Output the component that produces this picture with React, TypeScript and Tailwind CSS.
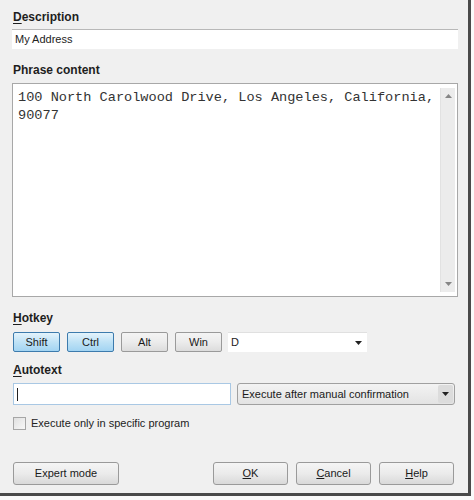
import React from "react";

const font = { fontFamily: '"Liberation Sans", Arial, sans-serif' };

function Label({ u, rest, className = "" }: { u: string; rest: string; className?: string }) {
  return (
    <div className={"h-[16px] leading-[16px] text-[12px] font-bold text-[#1e1e1e] " + className}>
      <span className="underline decoration-1 underline-offset-2">{u}</span>
      {rest}
    </div>
  );
}

function Tri({ className = "" }: { className?: string }) {
  return (
    <svg width="7" height="4" viewBox="0 0 7 4" className={className}>
      <path d="M0 0 L7 0 L3.5 4 Z" fill="#222" />
    </svg>
  );
}

function KeyBtn({ label, on }: { label: string; on?: boolean }) {
  return (
    <div
      className={
        "w-[47px] h-[20px] flex items-center justify-center text-[11px] rounded-[2px] border " +
        (on
          ? "border-[#3d7bad] bg-gradient-to-b from-[#e4f3fb] via-[#bfe2f6] to-[#a2d4f2] text-[#1a1a1a]"
          : "border-[#9a9a9a] bg-gradient-to-b from-[#f4f4f4] via-[#ececec] to-[#dcdcdc] text-[#1a1a1a]")
      }
    >
      {label}
    </div>
  );
}

function DlgBtn({ children, w }: { children: React.ReactNode; w: string }) {
  return (
    <div
      className={
        w +
        " h-[23px] flex items-center justify-center text-[11px] text-[#1a1a1a] rounded-[3px] border border-[#9a9a9a] bg-gradient-to-b from-[#f5f5f5] via-[#ebebeb] to-[#d9d9d9]"
      }
    >
      {children}
    </div>
  );
}

export default function App() {
  return (
    <div className="w-[474px] h-[500px] bg-[#fafafa]" style={font}>
      <div className="w-[471px] h-[496px] bg-[#f0f0f0] border-r-[3px] border-b-[3px] border-[#4a4a4a] flex flex-col pl-[12px] pr-[13px]">
        <Label u="D" rest="escription" className="mt-[9px] ml-[1px]" />
        <div className="mt-[4px] h-[20px] w-[446px] bg-white border-t border-[#b8b8b8] flex items-center pl-[3px] text-[11px] text-[#222]">
          My Address
        </div>

        <Label u="" rest="Phrase content" className="mt-[13px] ml-[1px]" />
        <div className="mt-[5px] h-[214px] w-[446px] bg-white border border-[#a8a8a8] flex">
          <div
            className="flex-1 pl-[5px] pt-[5px] text-[13.6px] leading-[18px] text-[#333]"
            style={{ fontFamily: '"Liberation Mono", "Courier New", monospace' }}
          >
            100 North Carolwood Drive, Los Angeles, California,
            <br />
            90077
          </div>
          <div className="w-[15px] my-[4px] mr-[2px] bg-[#ececec] border-l border-[#e2e2e2] flex flex-col items-center justify-between py-[6px]">
            <Tri className="rotate-180 opacity-50" />
            <Tri className="opacity-50" />
          </div>
        </div>

        <Label u="H" rest="otkey" className="mt-[13px] ml-[1px]" />
        <div className="mt-[6px] flex items-center gap-[7px] ml-[1px]">
          <KeyBtn label="Shift" on />
          <KeyBtn label="Ctrl" on />
          <KeyBtn label="Alt" />
          <KeyBtn label="Win" />
          <div className="w-[139px] h-[20px] bg-white border-t border-[#e0e0e0] flex items-center justify-between pl-[3px] pr-[5px] text-[11px] text-[#222] -ml-[1px]">
            D
            <Tri />
          </div>
        </div>

        <Label u="A" rest="utotext" className="mt-[10px] ml-[1px]" />
        <div className="mt-[5px] flex gap-[6px] ml-[1px]">
          <div className="w-[219px] h-[22px] bg-white border border-[#a9c8e4] flex items-center pl-[3px] text-[12px] text-[#222]">
            <span className="w-px h-[13px] bg-[#222]" />
          </div>
          <div className="w-[219px] h-[22px] rounded-[3px] border border-[#a0a0a0] bg-gradient-to-b from-[#f3f3f3] to-[#e3e3e3] flex items-center justify-between pl-[4px] pr-[1px] text-[11px] text-[#1a1a1a]">
            Execute after manual confirmation
            <div className="w-[15px] h-[18px] bg-[#dcdcdc] rounded-[2px] flex items-center justify-center">
              <Tri />
            </div>
          </div>
        </div>

        <div className="mt-[10px] flex items-center gap-[5px] ml-[1px] text-[11px] text-[#222]">
          <div className="w-[13px] h-[13px] border border-[#a6a6a6] bg-gradient-to-br from-[#e0e0e0] to-[#f8f8f8]" />
          Execute only in specific program
        </div>

        <div className="mt-[30px] flex ml-[1px]">
          <DlgBtn w="w-[106px]">Expert mode</DlgBtn>
          <div className="flex-1" />
          <div className="flex gap-[8px] mr-[1px]">
            <DlgBtn w="w-[75px]">
              <span className="underline">O</span>K
            </DlgBtn>
            <DlgBtn w="w-[75px]">
              <span className="underline">C</span>ancel
            </DlgBtn>
            <DlgBtn w="w-[75px]">
              <span className="underline">H</span>elp
            </DlgBtn>
          </div>
        </div>
      </div>
    </div>
  );
}
